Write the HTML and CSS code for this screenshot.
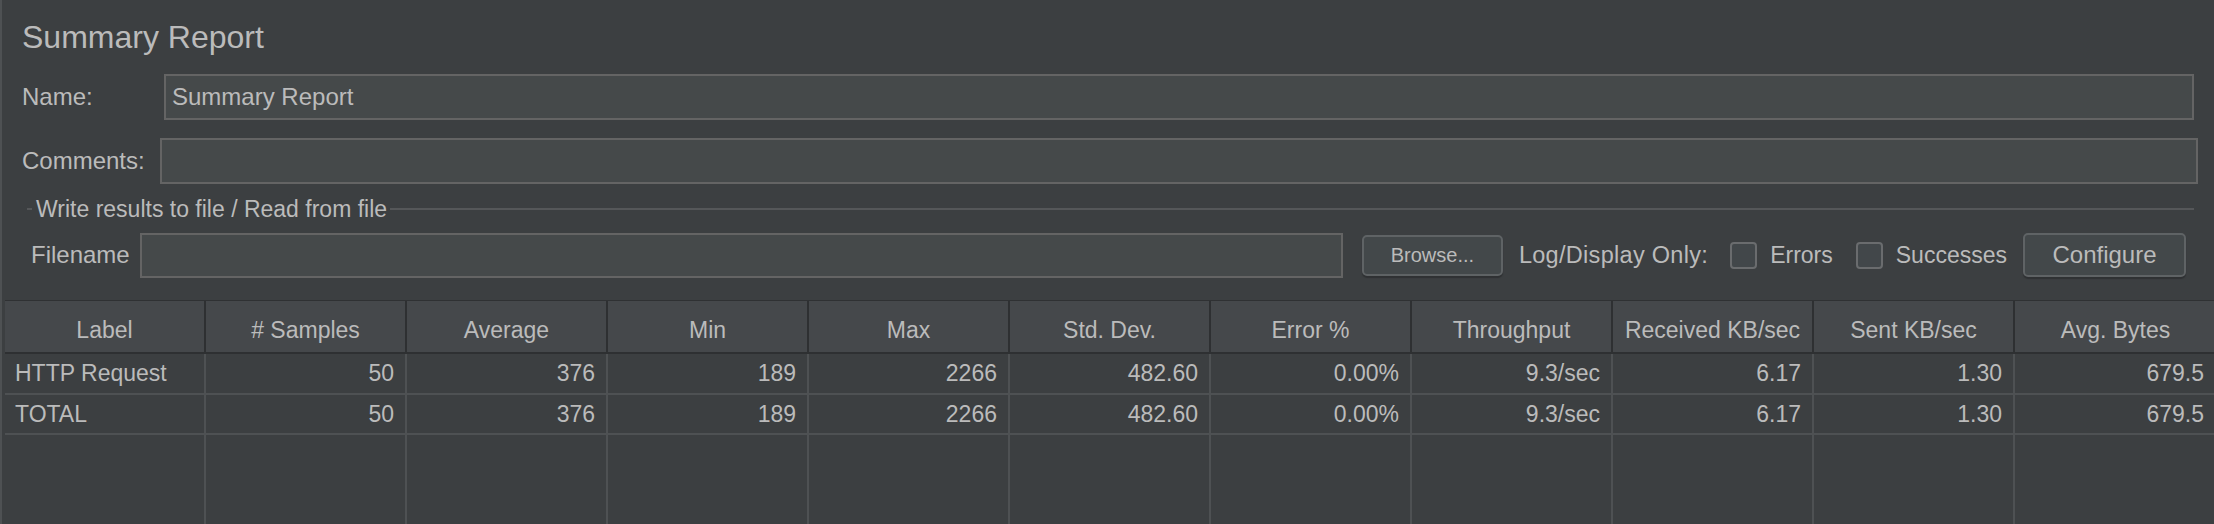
FILE: index.html
```html
<!DOCTYPE html>
<html>
<head>
<meta charset="utf-8">
<link rel="stylesheet" href="styles.css">
</head>
<body>
<div class="window">
  <div class="form">
    <div class="title">Summary Report</div>
    <div class="row name-row">
      <span class="label name-label">Name:</span>
      <div class="field name-field">Summary Report</div>
    </div>
    <div class="row comments-row">
      <span class="label comments-label">Comments:</span>
      <div class="field comments-field"></div>
    </div>
    <div class="legend">
      <span class="legend-tick"></span>
      <span class="legend-text">Write results to file / Read from file</span>
      <span class="legend-line"></span>
    </div>
    <div class="row file-row">
      <span class="label file-label">Filename</span>
      <div class="field file-field"></div>
      <button class="btn browse">Browse...</button>
      <span class="label log-label">Log/Display Only:</span>
      <span class="check"></span>
      <span class="label check-label">Errors</span>
      <span class="check check-2"></span>
      <span class="label check-label">Successes</span>
      <button class="btn configure">Configure</button>
    </div>
  </div>
  <div class="table">
    <div class="th">Label</div>
    <div class="th"># Samples</div>
    <div class="th">Average</div>
    <div class="th">Min</div>
    <div class="th">Max</div>
    <div class="th">Std. Dev.</div>
    <div class="th">Error %</div>
    <div class="th">Throughput</div>
    <div class="th">Received KB/sec</div>
    <div class="th">Sent KB/sec</div>
    <div class="th last">Avg. Bytes</div>

    <div class="td left">HTTP Request</div>
    <div class="td">50</div>
    <div class="td">376</div>
    <div class="td">189</div>
    <div class="td">2266</div>
    <div class="td">482.60</div>
    <div class="td">0.00%</div>
    <div class="td">9.3/sec</div>
    <div class="td">6.17</div>
    <div class="td">1.30</div>
    <div class="td last">679.5</div>

    <div class="td left">TOTAL</div>
    <div class="td">50</div>
    <div class="td">376</div>
    <div class="td">189</div>
    <div class="td">2266</div>
    <div class="td">482.60</div>
    <div class="td">0.00%</div>
    <div class="td">9.3/sec</div>
    <div class="td">6.17</div>
    <div class="td">1.30</div>
    <div class="td last">679.5</div>

    <div class="tf"></div>
    <div class="tf"></div>
    <div class="tf"></div>
    <div class="tf"></div>
    <div class="tf"></div>
    <div class="tf"></div>
    <div class="tf"></div>
    <div class="tf"></div>
    <div class="tf"></div>
    <div class="tf"></div>
    <div class="tf last"></div>
  </div>
</div>
</body>
</html>
```

FILE: styles.css
```css
html, body {
  margin: 0;
  padding: 0;
  background: #3c3f41;
}

body {
  width: 2214px;
  height: 524px;
  overflow: hidden;
  font-family: "Liberation Sans", Arial, sans-serif;
  color: #bbbbbb;
}

.window {
  height: 524px;
  border-left: 2px solid #4e5153;
  box-sizing: border-box;
  display: flex;
  flex-direction: column;
  overflow: hidden;
}

.form {
  padding: 17px 0 0 20px;
  height: 300px;
  flex: none;
  box-sizing: border-box;
  display: flex;
  flex-direction: column;
}

.title {
  font-size: 32px;
  line-height: 40px;
  height: 40px;
}

.row {
  display: flex;
  align-items: center;
}

.label {
  font-size: 24px;
  white-space: nowrap;
}

.field {
  background: #45494a;
  border: 2px solid #646464;
  box-sizing: border-box;
  height: 46px;
  font-size: 24px;
  line-height: 42px;
  padding: 0 6px;
}

.name-row {
  margin-top: 17px;
}

.name-label {
  width: 142px;
}

.name-field {
  flex: 1;
  margin-right: 20px;
}

.comments-row {
  margin-top: 18px;
}

.comments-label {
  width: 138px;
}

.comments-field {
  flex: 1;
  margin-right: 16px;
}

.legend {
  margin-top: 13px;
  height: 24px;
  display: flex;
  align-items: center;
  margin-right: 20px;
}

.legend-tick {
  width: 5px;
  height: 2px;
  background: #555759;
  margin-left: 5px;
  margin-right: 4px;
}

.legend-text {
  font-size: 23px;
  line-height: 24px;
  white-space: nowrap;
}

.legend-line {
  flex: 1;
  height: 2px;
  background: #555759;
  margin-left: 3px;
}

.file-row {
  margin-top: 11px;
  height: 46px;
  padding-left: 9px;
}

.file-label {
  width: 109px;
}

.file-field {
  flex: 1;
  height: 45px;
  margin-right: 19px;
}

.btn {
  font-family: "Liberation Sans", Arial, sans-serif;
  color: #bbbbbb;
  background: #43484a;
  border: 2px solid #5f6365;
  border-radius: 5px;
  box-shadow: 0 2px 1px #2f3133;
  box-sizing: border-box;
  padding: 0;
}

.browse {
  width: 141px;
  height: 41px;
  font-size: 20px;
  margin-right: 16px;
}

.log-label {
  font-size: 23.5px;
  letter-spacing: 0.3px;
  margin-right: 22px;
}

.check {
  width: 27px;
  height: 27px;
  box-sizing: border-box;
  border: 2px solid #6a6c6e;
  border-radius: 4px;
  background: #42474a;
  margin-right: 13px;
}

.check-label {
  font-size: 23px;
  margin-right: 23px;
}

.check-label + .btn {
  margin-left: -7px;
}

.configure {
  width: 163px;
  height: 44px;
  font-size: 24px;
  margin-right: 28px;
}

.table {
  flex: 1;
  margin-left: 3px;
  display: grid;
  grid-template-columns: repeat(11, 201px);
  grid-template-rows: 53px 41px 40px 1fr;
  border-top: 1px solid #2f3133;
}

.th {
  background: #45484b;
  border-right: 2px solid #2e3032;
  border-bottom: 2px solid #2e3032;
  font-size: 23px;
  display: flex;
  align-items: center;
  justify-content: center;
  padding-top: 7px;
  box-sizing: border-box;
  white-space: nowrap;
}

.td {
  background: #3c3f41;
  border-right: 2px solid #4e5153;
  border-bottom: 2px solid #4e5153;
  font-size: 23px;
  display: flex;
  align-items: center;
  justify-content: flex-end;
  padding-right: 11px;
  box-sizing: border-box;
  white-space: nowrap;
}

.td.left {
  justify-content: flex-start;
  padding-left: 10px;
  padding-right: 0;
}

.td.last {
  padding-right: 12px;
}

.tf {
  border-right: 2px solid #4e5153;
}

.last {
  border-right: none;
}
```
